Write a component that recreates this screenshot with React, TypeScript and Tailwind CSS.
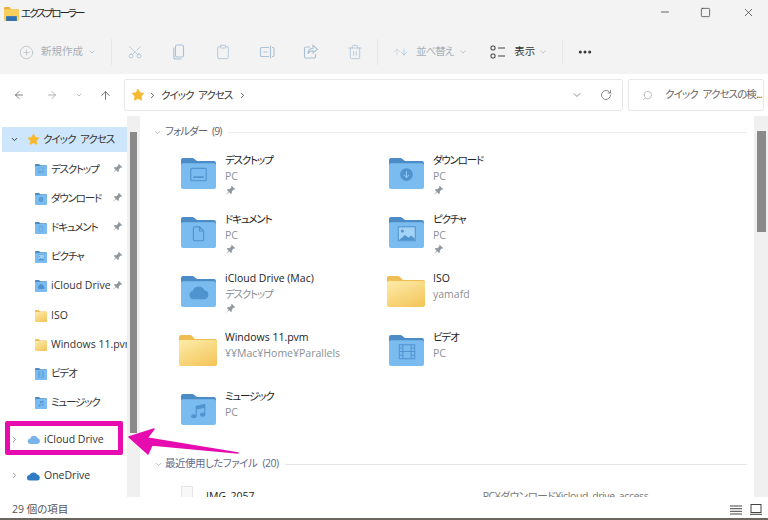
import React from "react";
import {
  ArrowDown,
  ArrowLeft,
  ArrowRight,
  ArrowUp,
  ChevronDown,
  ChevronRight,
  CirclePlus,
  Clipboard,
  Minus,
  MoreHorizontal,
  RotateCw,
  Scissors,
  Search,
  Square,
  Star,
  Trash2,
  X,
} from "lucide-react";

const jp = "[font-family:'Open_Sans','Noto_Sans_CJK_JP',sans-serif] [font-feature-settings:'palt']";

// katakana in the reference font runs narrower than Noto's
const fit = (s: string) => (/[\u3040-\u30ff]/.test(s) && !s.includes("¥") ? "tracking-[-1.2px]" : "");

type Glyph = "desktop" | "download" | "doc" | "picture" | "cloud" | "film" | "music" | "none";

function FolderGlyph({ glyph }: { glyph: Glyph }) {
  const c = "#4f93cf";
  if (glyph === "desktop")
    return (
      <g fill="none" stroke={c} strokeWidth="1.1">
        <rect x="9.5" y="10" width="15" height="12" rx="1.2" />
        <path d="M12 18.5h10" strokeWidth="1.6" />
      </g>
    );
  if (glyph === "download")
    return (
      <g>
        <circle cx="17" cy="16" r="6.2" fill={c} />
        <path d="M17 12.5v6M14.6 16.4l2.4 2.4 2.4-2.4" fill="none" stroke="#8cc4f2" strokeWidth="1" />
      </g>
    );
  if (glyph === "doc")
    return <path d="M13 9.5h5l4 4v8.5a1 1 0 0 1-1 1h-8a1 1 0 0 1-1-1v-11.500a1 1 0 0 1 1-1zM18 9.500v4h4" fill="none" stroke={c} strokeWidth="1.1" />;
  if (glyph === "picture")
    return (
      <g>
        <rect x="9" y="9.500" width="16.500" height="13.500" fill="#a4d3f8" stroke={c} strokeWidth="1" />
        <circle cx="13" cy="13.500" r="1.500" fill={c} />
        <path d="M9.500 22.500l6-5 3.500 2.500 2.500-2 3.500 3v1.500z" fill={c} />
      </g>
    );
  if (glyph === "cloud")
    return <path d="M12 22.500a4 4 0 0 1-.6-7.900 6 6 0 0 1 11.300-.8 4.400 4.400 0 0 1 .3 8.700z" fill={c} />;
  if (glyph === "film")
    return (
      <g fill="none" stroke={c} strokeWidth="1">
        <rect x="10" y="9.500" width="15" height="13.500" />
        <path d="M13.500 9.500v13.500M21.500 9.500v13.500M13.500 16h8M10 12.500h3.500M10 16h3.500M10 19.500h3.500M21.500 12.500h3.500M21.500 16h3.500M21.500 19.500h3.500" />
      </g>
    );
  if (glyph === "music")
    return (
      <g fill={c}>
        <ellipse cx="12.500" cy="21.500" rx="2.600" ry="2" />
        <ellipse cx="21" cy="20" rx="2.600" ry="2" />
        <path d="M14.200 21.500V11.500l9.400-2v10.500h-1.100v-6.500l-7.200 1.500v6.500z" />
      </g>
    );
  return null;
}

function BlueFolder({ glyph, small }: { glyph: Glyph; small?: boolean }) {
  return (
    <svg viewBox="0 0 34 30" className={small ? "w-[12px] h-[12px] shrink-0" : "w-[35px] h-[31px] shrink-0"} preserveAspectRatio="none">
      <path d="M0 5V2a2 2 0 0 1 2-2h9a3 3 0 0 1 2 1l2.500 2H32a2 2 0 0 1 2 2v3H0z" fill="#4c8cc6" />
      <rect x="0" y="5" width="34" height="25" rx="2" fill="#7bbcf0" />
      <FolderGlyph glyph={glyph} />
    </svg>
  );
}

function YellowFolder({ small }: { small?: boolean }) {
  return (
    <svg viewBox="0 0 38 31" className={small ? "w-[12px] h-[12px] shrink-0" : "w-[38px] h-[31px] shrink-0"} preserveAspectRatio="none">
      <defs>
        <linearGradient id="yf" x1="0.200" y1="0" x2="0.800" y2="1">
          <stop offset="0" stopColor="#fce9a4" />
          <stop offset="1" stopColor="#f4c65c" />
        </linearGradient>
      </defs>
      <path d="M0 6V2a2 2 0 0 1 2-2h9a3 3 0 0 1 2 1l3 3h20a2 2 0 0 1 2 2v2H0z" fill="#efbe52" />
      <rect x="0" y="5" width="38" height="26" rx="2" fill="url(#yf)" />
    </svg>
  );
}

function PinIcon({ className }: { className: string }) {
  return (
    <svg viewBox="0 0 12 12" className={className} fill="currentColor">
      <path d="M7.300.8l3.900 3.900-1 .5-.8-.2-2 2 .1 1.900-1 1-1.900-2L1 11 .9 10.900 4 7.300 2.100 5.400l1-1 1.900.1 2-2-.2-.8z" />
    </svg>
  );
}

const sideItems: { name: string; glyph: Glyph | "yellow"; pin?: boolean }[] = [
  { name: "デスクトップ", glyph: "desktop", pin: true },
  { name: "ダウンロード", glyph: "download", pin: true },
  { name: "ドキュメント", glyph: "doc", pin: true },
  { name: "ピクチャ", glyph: "picture", pin: true },
  { name: "iCloud Drive", glyph: "cloud", pin: true },
  { name: "ISO", glyph: "yellow" },
  { name: "Windows 11.pvm", glyph: "yellow" },
  { name: "ビデオ", glyph: "film" },
  { name: "ミュージック", glyph: "music" },
];

const folders: { name: string; sub: string; glyph: Glyph | "yellow"; pin?: boolean }[] = [
  { name: "デスクトップ", sub: "PC", glyph: "desktop", pin: true },
  { name: "ダウンロード", sub: "PC", glyph: "download", pin: true },
  { name: "ドキュメント", sub: "PC", glyph: "doc", pin: true },
  { name: "ピクチャ", sub: "PC", glyph: "picture", pin: true },
  { name: "iCloud Drive (Mac)", sub: "デスクトップ", glyph: "cloud", pin: true },
  { name: "ISO", sub: "yamafd", glyph: "yellow" },
  { name: "Windows 11.pvm", sub: "¥¥Mac¥Home¥Parallels", glyph: "yellow" },
  { name: "ビデオ", sub: "PC", glyph: "film" },
  { name: "ミュージック", sub: "PC", glyph: "music" },
];

const toolIcon = "w-[16px] h-[16px] text-[#a9c2d8]";

function CommandIcons() {
  return (
    <>
      <div className="w-[44px] flex justify-center">
        <Scissors className={`${toolIcon} -rotate-90`} strokeWidth={1.200} />
      </div>
      <div className="w-[44px] flex justify-center">
        <svg viewBox="0 0 16 16" className={toolIcon} fill="none" stroke="currentColor" strokeWidth="1.100">
          <rect x="4.500" y="1" width="8" height="12" rx="1.500" />
          <path d="M2.800 3.500v9.500a2 2 0 0 0 2 2h5.500" />
        </svg>
      </div>
      <div className="w-[44px] flex justify-center">
        <Clipboard className={toolIcon} strokeWidth={1.200} />
      </div>
      <div className="w-[44px] flex justify-center">
        <svg viewBox="0 0 16 16" className={toolIcon} fill="none" stroke="currentColor" strokeWidth="1.100">
          <path d="M10 3.500H2.500a1 1 0 0 0-1 1v7a1 1 0 0 0 1 1H10M13 3.500h1a1 1 0 0 1 1 1v7a1 1 0 0 1-1 1h-1M11.500 1.500v13M4.500 8h4" />
        </svg>
      </div>
      <div className="w-[44px] flex justify-center">
        <svg viewBox="0 0 16 16" className={toolIcon} fill="none" stroke="currentColor" strokeWidth="1.100">
          <path d="M7 3H3a1.500 1.500 0 0 0-1.500 1.500v8A1.500 1.500 0 0 0 3 14h8a1.500 1.500 0 0 0 1.500-1.500V10" />
          <path d="M10 1.500l4.500 3.700-4.500 3.700V6.800c-2.500 0-4 1-5 3 0-3.200 1.800-5.300 5-5.500z" />
        </svg>
      </div>
      <div className="w-[44px] flex justify-center">
        <Trash2 className={toolIcon} strokeWidth={1.200} />
      </div>
    </>
  );
}

export default function App() {
  return (
    <div className={`relative w-[768px] h-[520px] overflow-hidden bg-white text-[10.5px] text-[#333] ${jp}`}>
      {/* title bar */}
      <div className="h-[30px] bg-[#f3f3f3] flex items-center pl-[4px]">
        <svg viewBox="0 0 14 13" className="w-[15px] h-[14px] mb-[2px]">
          <path d="M0 2V1a1 1 0 0 1 1-1h4l1.500 2H14v2H0z" fill="#e6b23c" />
          <rect y="2" width="14" height="11" rx="1" fill="#f8cf5e" />
          <rect x="2" y="8.500" width="10" height="4.500" fill="#2f6fb4" />
        </svg>
        <span className="ml-[2px] mb-[3px] text-[#222] tracking-[-2px]">エクスプローラー</span>
        <div className="ml-auto flex items-center pr-[13px] mb-[6px] text-[#333]">
          <Minus className="w-[12px] h-[12px]" strokeWidth={1.500} />
          <Square className="w-[11px] h-[11px] ml-[29px]" strokeWidth={1.500} />
          <X className="w-[13px] h-[13px] ml-[31px]" strokeWidth={1.300} />
        </div>
      </div>

      {/* command bar */}
      <div className="h-[44px] bg-[#f3f3f3] flex items-center pl-[19px] text-[#a9b0b6]">
        <div className="w-[92px] flex items-center">
          <CirclePlus className="w-[15px] h-[15px] text-[#b5bcc2]" strokeWidth={1.200} />
          <span className="ml-[7px]">新規作成</span>
          <ChevronDown className="w-[8px] h-[8px] ml-[5px]" strokeWidth={2} />
        </div>
        <div className="w-px h-[26px] bg-[#e6e6e6] mr-px" />
        <CommandIcons />
        <div className="w-px h-[26px] bg-[#e6e6e6]" />
        <div className="ml-[14px] flex items-center">
          <ArrowUp className="w-[10px] h-[14px] text-[#b3c6d8]" strokeWidth={1.200} />
          <ArrowDown className="w-[10px] h-[14px] -ml-[3px] text-[#7fb0dc]" strokeWidth={1.200} />
          <span className="ml-[7px] tracking-[-1px]">並べ替え</span>
          <ChevronDown className="w-[8px] h-[8px] ml-[6px]" strokeWidth={2} />
        </div>
        <svg viewBox="0 0 16 14" className="w-[16px] h-[14px] ml-[23px] text-[#444]" fill="none" stroke="currentColor" strokeWidth="1.100">
          <rect x="1" y="1" width="4" height="4" rx="1.500" />
          <rect x="1" y="9" width="4" height="4" rx="1.500" />
          <path d="M8 3h7M8 11h7" />
        </svg>
        <span className="ml-[8px] text-[#333]">表示</span>
        <ChevronDown className="w-[8px] h-[8px] ml-[4px]" strokeWidth={2} />
        <div className="w-px h-[26px] bg-[#e6e6e6] ml-[15px]" />
        <MoreHorizontal className="w-[16px] h-[16px] ml-[14px] text-[#333]" strokeWidth={2.500} />
      </div>

      {/* address row */}
      <div className="h-[42px] flex items-center pl-[13px] pr-[4px]">
        <ArrowLeft className="w-[12px] h-[12px] shrink-0 text-[#555]" strokeWidth={1.500} />
        <ArrowRight className="w-[12px] h-[12px] shrink-0 ml-[21px] text-[#999]" strokeWidth={1.500} />
        <ChevronDown className="w-[8px] h-[8px] shrink-0 ml-[17px] text-[#999]" strokeWidth={2} />
        <ArrowUp className="w-[13px] h-[13px] shrink-0 ml-[16px] text-[#555]" strokeWidth={1.500} />
        <div className="ml-[12px] w-[499px] shrink-0 h-[32px] border border-[#e8e8e8] rounded-[2px] flex items-center pl-[6px]">
          <Star className="w-[14px] h-[14px] text-[#f5b82e] fill-[#f5b82e]" strokeWidth={1} />
          <ChevronRight className="w-[9px] h-[9px] ml-[3px] text-[#555]" strokeWidth={2.500} />
          <span className="ml-[4px] pt-px text-[#333] tracking-[-1px] [word-spacing:3px]">クイック アクセス</span>
          <ChevronRight className="w-[9px] h-[9px] ml-[6px] text-[#555]" strokeWidth={2.500} />
          <ChevronDown className="w-[12px] h-[12px] ml-auto text-[#666]" strokeWidth={1.500} />
          <RotateCw className="w-[12px] h-[12px] ml-[17px] mr-[10px] text-[#666]" strokeWidth={1.500} />
        </div>
        <div className="ml-[5px] w-[136px] shrink-0 h-[32px] border border-[#e8e8e8] rounded-[2px] flex items-center pl-[13px]">
          <Search className="w-[11px] h-[11px] shrink-0 text-[#999] -scale-x-100" strokeWidth={1.300} />
          <span className="ml-[12px] text-[#666] whitespace-nowrap tracking-[-0.9px] [word-spacing:3px]">クイック アクセスの検...</span>
        </div>
      </div>

      {/* body */}
      <div className="h-[381px] flex">
        {/* navigation pane */}
        <div className="w-[127px] shrink-0 overflow-hidden pt-[11px]">
          <div className="ml-[2px] h-[25px] bg-[#cde6fb] flex items-center pl-[8px] whitespace-nowrap">
            <ChevronDown className="w-[9px] h-[9px] text-[#333]" strokeWidth={2.500} />
            <Star className="w-[13px] h-[13px] ml-[8px] text-[#f5b82e] fill-[#f5b82e]" strokeWidth={1} />
            <span className="ml-[3px] pt-px tracking-[-1px] [word-spacing:3px]">クイック アクセス</span>
          </div>
          <div className="pt-[3px]">
            {sideItems.map((it) => (
              <div key={it.name} className="h-[29.200px] flex items-center pl-[35px] relative whitespace-nowrap">
                {it.glyph === "yellow" ? <YellowFolder small /> : <BlueFolder small glyph={it.glyph} />}
                <span className={`ml-[4px] ${fit(it.name)}`}>{it.name}</span>
                {it.pin && <PinIcon className="absolute left-[112px] top-[8px] w-[11px] h-[11px] text-[#8f969c]" />}
              </div>
            ))}
          </div>
          <div className="h-[36px] mt-[4px] flex items-center pl-[10px] whitespace-nowrap">
            <ChevronRight className="w-[9px] h-[9px] text-[#777]" strokeWidth={2} />
            <svg viewBox="0 0 16 12" className="w-[14px] h-[11px] ml-[8px]">
              <path d="M4 11a3 3 0 0 1-.4-6A4.500 4.500 0 0 1 12 4.300 3.400 3.400 0 0 1 12 11z" fill="#79b4e8" />
            </svg>
            <span className="ml-[3px]">iCloud Drive</span>
          </div>
          <div className="h-[36px] flex items-center pl-[10px] whitespace-nowrap">
            <ChevronRight className="w-[9px] h-[9px] text-[#777]" strokeWidth={2} />
            <svg viewBox="0 0 16 11" className="w-[15px] h-[10px] ml-[7px]">
              <path d="M4 10.500a3 3 0 0 1-.4-6A4.800 4.800 0 0 1 12 3.800a3.400 3.400 0 0 1 .3 6.700z" fill="#2d7cc4" />
            </svg>
            <span className="ml-[3px]">OneDrive</span>
          </div>
        </div>
        {/* nav scrollbar */}
        <div className="w-[13px] shrink-0 bg-[#f0f0f0] pt-[16px] px-[3px]">
          <div className="h-[301px] bg-[#8a8a8a]" />
        </div>

        {/* content */}
        <div className="flex-1 overflow-hidden pt-[8px]">
          <div className="h-[16px] flex items-center pl-[13px] pr-[7px] text-[#5c6470]">
            <ChevronDown className="w-[9px] h-[9px] text-[#888]" strokeWidth={1.500} />
            <span className="ml-[3px] tracking-[-0.9px] [word-spacing:3px]">フォルダー (9)</span>
            <div className="ml-[6px] flex-1 h-px bg-[#ececec]" />
          </div>
          <div className="grid grid-cols-[208px_208px] auto-rows-[59px] pl-[39px] pt-[17px]">
            {folders.map((f) => (
              <div key={f.name} className="flex items-start">
                <div className="w-[38px] h-[31px] flex justify-center shrink-0 mt-[1px]">
                  {f.glyph === "yellow" ? <YellowFolder /> : <BlueFolder glyph={f.glyph} />}
                </div>
                <div className="ml-[8px] leading-[15.500px] -mt-[4px] whitespace-nowrap">
                  <div className={`text-[#222] ${fit(f.name)}`}>{f.name}</div>
                  <div className={`text-[#8a8f94] ${fit(f.sub)}`}>{f.sub}</div>
                  {f.pin && <PinIcon className="w-[11px] h-[11px] mt-[1px] text-[#8f969c]" />}
                </div>
              </div>
            ))}
          </div>
          <div className="h-[16px] flex items-center pl-[14px] pr-[7px] text-[#5f6b8c] mt-[4px]">
            <ChevronDown className="w-[9px] h-[9px] text-[#888]" strokeWidth={1.500} />
            <span className="ml-[2px] tracking-[-0.5px] [word-spacing:3px]">最近使用したファイル (20)</span>
            <div className="ml-[6px] flex-1 h-px bg-[#e4e4e4]" />
          </div>
          <div className="flex items-start pl-[41px] pt-[14px]">
            <div className="w-[12px] h-[16px] bg-[#f8f8f8] border border-[#e4e4e4] rounded-[1px]" />
            <span className="ml-[13px] mt-[3px] text-[#222]">IMG_2057</span>
            <span className="ml-[228px] mt-[3px] text-[#777] whitespace-nowrap tracking-[-0.4px]">PC¥ダウンロード¥icloud_drive_access</span>
          </div>
        </div>

        {/* content scrollbar */}
        <div className="w-[14px] shrink-0 bg-[#f0f0f0] pt-[15px] pl-[3px] pr-[2px]">
          <div className="h-[101px] bg-[#8a8a8a]" />
        </div>
      </div>

      {/* status bar */}
      <div className="h-[21px] bg-white flex items-center pl-[12px] pr-[6px] pt-[4px] text-[#555]">
        <span>29 個の項目</span>
        <svg viewBox="0 0 12 10" className="ml-auto w-[12px] h-[10px] text-[#444]" fill="none" stroke="currentColor" strokeWidth="1">
          <path d="M0 1h12M0 3.700h12M0 6.300h12M0 9h12" />
        </svg>
        <svg viewBox="0 0 12 11" className="ml-[8px] w-[12px] h-[11px] text-[#444]" fill="none" stroke="currentColor" strokeWidth="1">
          <rect x="1" y=".500" width="10" height="8" />
          <path d="M0 10.300h12" />
        </svg>
      </div>
      <div className="h-[2px] bg-[#6b675e]" />

      {/* annotation: pink box and arrow */}
      <div className="absolute left-[5px] top-[421px] w-[118px] h-[34px] border-[5px] border-[#e60cb0] rounded-[2px]" />
      <svg viewBox="0 0 768 520" className="absolute inset-0 w-[768px] h-[520px] pointer-events-none">
        <path d="M129 437L154 429L147 438L238 453L152 445L148 454Z" fill="#e60cb0" stroke="#e60cb0" strokeWidth="1.500" strokeLinejoin="round" />
      </svg>
    </div>
  );
}
